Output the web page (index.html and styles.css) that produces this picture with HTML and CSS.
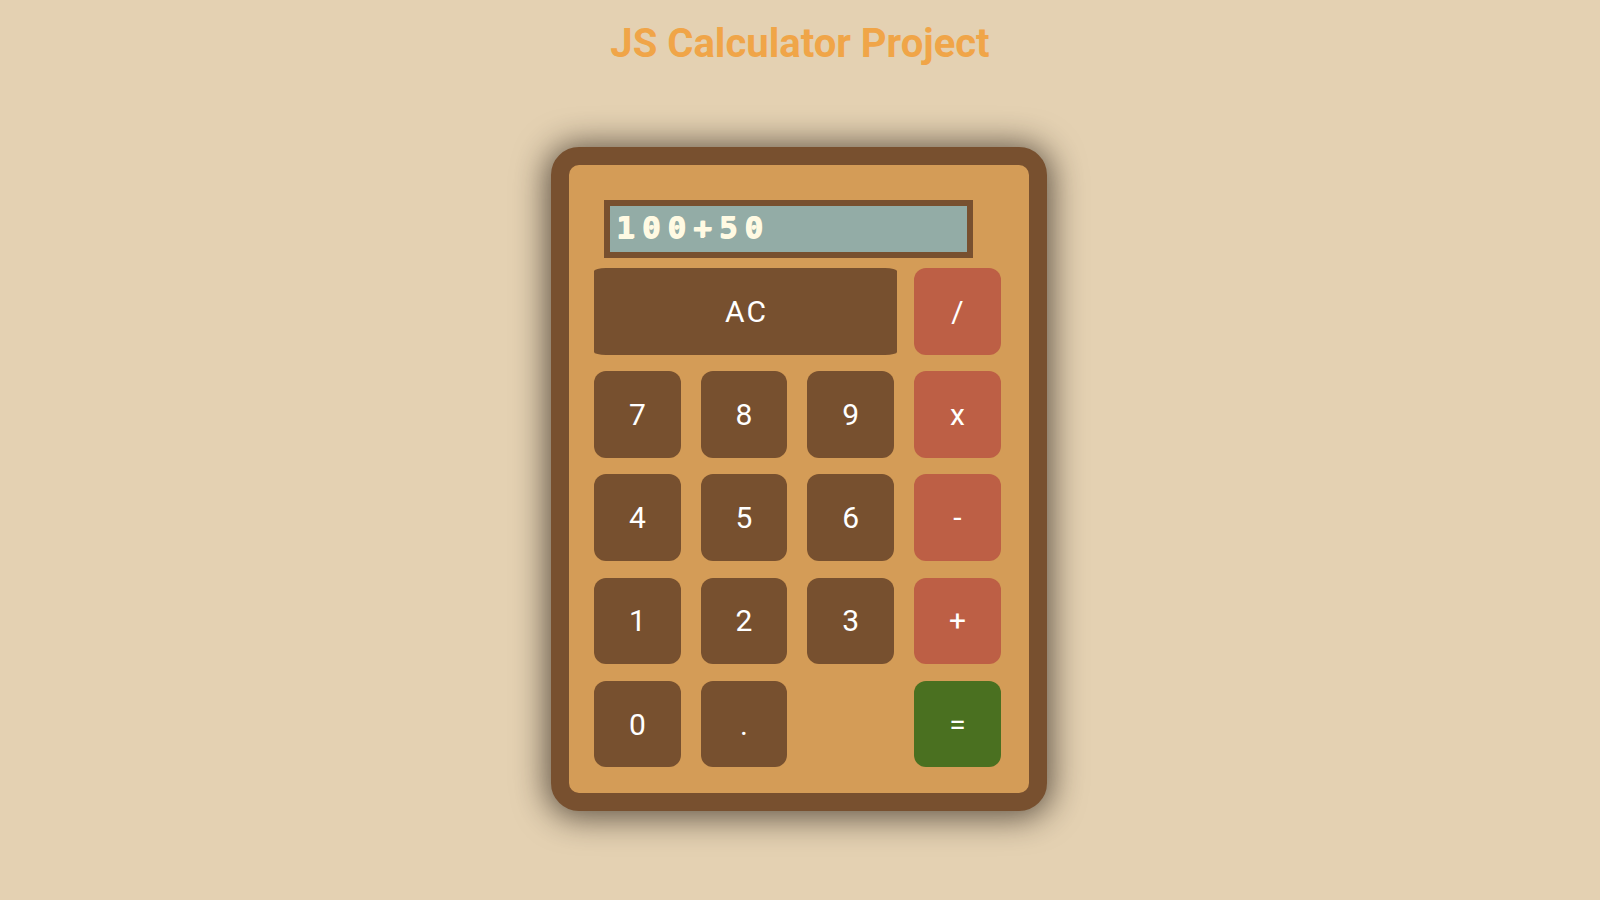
FILE: index.html
```html
<!DOCTYPE html>
<html lang="en">
<head>
<meta charset="utf-8">
<title>JS Calculator Project</title>
<link rel="stylesheet" href="styles.css">
</head>
<body>
  <h1 class="title">JS Calculator Project</h1>
  <main class="calculator">
    <div class="display">100+50</div>
    <div class="keys">
      <button class="key key-ac">AC</button>
      <button class="key key-op">/</button>
      <button class="key">7</button>
      <button class="key">8</button>
      <button class="key">9</button>
      <button class="key key-op">x</button>
      <button class="key">4</button>
      <button class="key">5</button>
      <button class="key">6</button>
      <button class="key key-op">-</button>
      <button class="key">1</button>
      <button class="key">2</button>
      <button class="key">3</button>
      <button class="key key-op">+</button>
      <button class="key">0</button>
      <button class="key">.</button>
      <button class="key key-eq">=</button>
    </div>
  </main>
</body>
</html>
```

FILE: styles.css
```css
html, body {
  margin: 0;
  padding: 0;
}

body {
  background: #e4d1b2;
  font-family: Roboto, "Liberation Sans", sans-serif;
  display: flex;
  flex-direction: column;
  align-items: center;
  min-height: 900px;
}

.title {
  margin: 24px 0 0;
  font-size: 40px;
  line-height: 40px;
  font-weight: 700;
  color: #f0a548;
  text-align: center;
}

.calculator {
  margin-top: 83px;
  margin-right: 2px;
  box-sizing: border-box;
  width: 496px;
  height: 664px;
  border: 18px solid #78502f;
  border-radius: 28px;
  background: #d49c57;
  box-shadow: 0 2px 32px 5px rgba(30, 22, 15, 0.65);
  padding: 35px 0 0 25px;
}

.display {
  box-sizing: border-box;
  width: 369px;
  height: 58px;
  margin-left: 10px;
  border: 6px solid #78502f;
  background: #93aca6;
  color: #fffae3;
  font-family: "DejaVu Sans Mono", "Liberation Mono", monospace;
  font-weight: 700;
  font-size: 31px;
  letter-spacing: 7px;
  line-height: 43px;
  padding-left: 6px;
  text-shadow: 1px 0 0 #fffae3, 0 1px 0 #fffae3;
  white-space: nowrap;
  overflow: hidden;
}

.keys {
  margin-top: 10px;
  display: grid;
  grid-template-columns: repeat(4, 86.7px);
  grid-auto-rows: 86.7px;
  column-gap: 20px;
  row-gap: 16.5px;
}

.key {
  border: none;
  margin: 0;
  padding: 0;
  border-radius: 12px;
  background: #77502f;
  color: #ffffff;
  font-family: Roboto, "Liberation Sans", sans-serif;
  font-size: 30px;
  font-weight: 400;
  display: flex;
  align-items: center;
  justify-content: center;
  cursor: pointer;
}

.key-ac {
  grid-column: span 3;
  width: calc(100% + 3px);
  border-radius: 12px / 3px;
  letter-spacing: 2px;
  padding-left: 2px;
}

.key-op {
  background: #bd5f45;
}

.key-eq {
  grid-column: 4;
  background: #4a7020;
}
```
